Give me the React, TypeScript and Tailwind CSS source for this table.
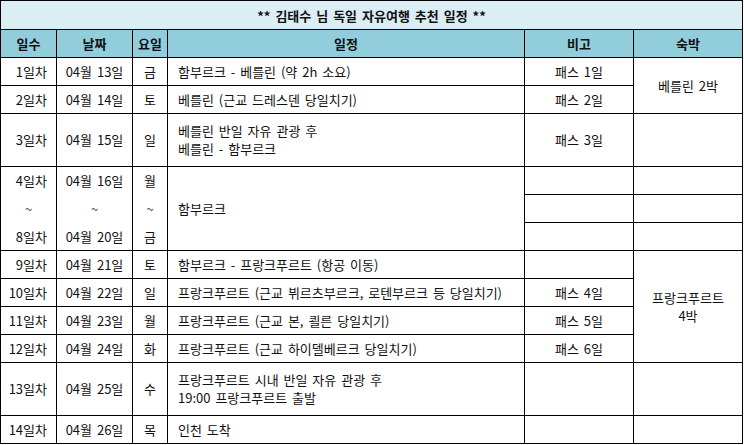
import React from "react";

const base =
  "bg-white flex items-center text-[13px] leading-[18px] text-[#111] whitespace-nowrap [word-spacing:2px]";

function C({
  children,
  cls = "",
}: {
  children?: React.ReactNode;
  cls?: string;
}) {
  return <div className={`${base} ${cls}`}>{children}</div>;
}

type Row = {
  day: string;
  date: string;
  wd: string;
  plan: React.ReactNode;
  note?: string;
};

const Day = ({ t }: { t: string }) => (
  <C cls="justify-end pr-[9px]">{t}</C>
);
const Date_ = ({ t }: { t: string }) => <C cls="justify-center">{t}</C>;
const Wd = ({ t }: { t: string }) => <C cls="justify-center">{t}</C>;
const Plan = ({ children }: { children: React.ReactNode }) => (
  <C cls="justify-start pl-[10px]">{children}</C>
);
const Note = ({ t }: { t?: string }) => <C cls="justify-center">{t}</C>;

function Std({ r }: { r: Row }) {
  return (
    <>
      <Day t={r.day} />
      <Date_ t={r.date} />
      <Wd t={r.wd} />
      <Plan>{r.plan}</Plan>
      <Note t={r.note} />
    </>
  );
}

export default function App() {
  return (
    <div className="w-[744px] h-[445px] bg-white font-['Noto_Sans_CJK_KR','Noto_Sans',sans-serif]">
      <div className="grid w-[743px] grid-cols-[55px_75px_34px_356px_108px_108px] grid-rows-[28px_27px_27px_27px_52px_27px_27px_27px_27px_27px_27px_27px_52px_27px] gap-px p-px bg-black">
        <div className="col-span-6 bg-[#daeef3] flex items-center justify-center text-[13px] font-bold text-[#111] pt-[1px] [word-spacing:2px]">
          ** 김태수 님 독일 자유여행 추천 일정 **
        </div>
        {["일수", "날짜", "요일", "일정", "비고", "숙박"].map((h) => (
          <div
            key={h}
            className="bg-[#92cddc] flex items-center justify-center text-[13px] font-bold text-[#111]"
          >
            {h}
          </div>
        ))}

        {/* 1 */}
        <Std
          r={{
            day: "1일차",
            date: "04월 13일",
            wd: "금",
            plan: "함부르크 - 베를린 (약 2h 소요)",
            note: "패스 1일",
          }}
        />
        <C cls="row-span-2 justify-center">베를린 2박</C>
        {/* 2 */}
        <Std
          r={{
            day: "2일차",
            date: "04월 14일",
            wd: "토",
            plan: "베를린 (근교 드레스덴 당일치기)",
            note: "패스 2일",
          }}
        />
        {/* 3 */}
        <Std
          r={{
            day: "3일차",
            date: "04월 15일",
            wd: "일",
            plan: (
              <div className="flex flex-col">
                <span>베를린 반일 자유 관광 후</span>
                <span>베를린 - 함부르크</span>
              </div>
            ),
            note: "패스 3일",
          }}
        />
        <C />
        {/* 4 ~ 8 */}
        <div className="row-span-3 bg-white flex flex-col gap-px text-[13px] leading-[18px] text-[#111]">
          <div className="h-[27px] flex items-center justify-end pr-[9px]">4일차</div>
          <div className="h-[27px] flex items-center justify-center text-[#555]">~</div>
          <div className="h-[27px] flex items-center justify-end pr-[9px]">8일차</div>
        </div>
        <div className="row-span-3 bg-white flex flex-col gap-px text-[13px] leading-[18px] text-[#111] [word-spacing:2px]">
          <div className="h-[27px] flex items-center justify-center">04월 16일</div>
          <div className="h-[27px] flex items-center justify-center text-[#555]">~</div>
          <div className="h-[27px] flex items-center justify-center">04월 20일</div>
        </div>
        <div className="row-span-3 bg-white flex flex-col gap-px text-[13px] leading-[18px] text-[#111]">
          <div className="h-[27px] flex items-center justify-center">월</div>
          <div className="h-[27px] flex items-center justify-center text-[#555]">~</div>
          <div className="h-[27px] flex items-center justify-center">금</div>
        </div>
        <C cls="row-span-3 justify-start pl-[10px]">함부르크</C>
        <C />
        <C />
        <C />
        <C />
        <C />
        <C />
        {/* 9 */}
        <Std
          r={{
            day: "9일차",
            date: "04월 21일",
            wd: "토",
            plan: "함부르크 - 프랑크푸르트 (항공 이동)",
          }}
        />
        <C cls="row-span-4 justify-center">
          <div className="flex flex-col items-center">
            <span>프랑크푸르트</span>
            <span>4박</span>
          </div>
        </C>
        <Std
          r={{
            day: "10일차",
            date: "04월 22일",
            wd: "일",
            plan: "프랑크푸르트 (근교 뷔르츠부르크, 로텐부르크 등 당일치기)",
            note: "패스 4일",
          }}
        />
        <Std
          r={{
            day: "11일차",
            date: "04월 23일",
            wd: "월",
            plan: "프랑크푸르트 (근교 본, 쾰른 당일치기)",
            note: "패스 5일",
          }}
        />
        <Std
          r={{
            day: "12일차",
            date: "04월 24일",
            wd: "화",
            plan: "프랑크푸르트 (근교 하이델베르크 당일치기)",
            note: "패스 6일",
          }}
        />
        {/* 13 */}
        <Std
          r={{
            day: "13일차",
            date: "04월 25일",
            wd: "수",
            plan: (
              <div className="flex flex-col">
                <span>프랑크푸르트 시내 반일 자유 관광 후</span>
                <span>19:00 프랑크푸르트 출발</span>
              </div>
            ),
          }}
        />
        <C />
        {/* 14 */}
        <Std
          r={{
            day: "14일차",
            date: "04월 26일",
            wd: "목",
            plan: "인천 도착",
          }}
        />
        <C />
      </div>
    </div>
  );
}
